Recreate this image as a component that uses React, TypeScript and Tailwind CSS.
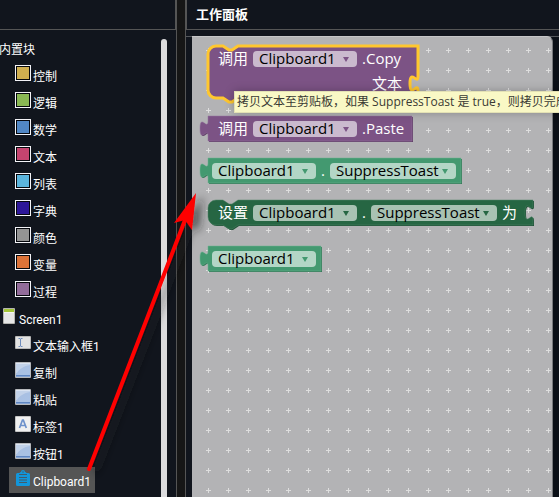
import React from "react";

const TAB_OUT = "V20c0-10-8 8-8-7.5s8 2.5 8-7.5";
const TAB_IN = "v5c0 10-8-8-8 7.5s8-2.5 8 7.5";

function valuePath(width: number) {
  return `M0 0H${width}V25H0${TAB_OUT}z`;
}

function statementPath(width: number, height: number, socketY: number) {
  return `M0 8A8 8 0 0 1 8 0H15l6 4h3l6-4H${width}V${socketY}${TAB_IN}V${height}H30l-6 4h-3l-6-4H8a8 8 0 0 1-8-8z`;
}

type Tone = "purple" | "green" | "dark";

const tones: Record<Tone, { fill: string; shade: string; light: string; text: string }> = {
  purple: { fill: "#7c5385", shade: "#63426a", light: "#9675a0", text: "text-[#7c5385]" },
  green: { fill: "#439970", shade: "#367a5a", light: "#6cb392", text: "text-[#439970]" },
  dark: { fill: "#266643", shade: "#1e5236", light: "#4f8568", text: "text-[#266643]" },
};

function Shape({ d, tone, selected }: { d: string; tone: Tone; selected?: boolean }) {
  const t = tones[tone];
  return (
    <svg className="absolute left-0 top-0 h-px w-px overflow-visible" aria-hidden="true">
      {!selected && <path d={d} fill={t.shade} transform="translate(1 1)" />}
      <path d={d} fill={t.fill} />
      {selected ? (
        <path d={d} fill="none" stroke="#ffc72e" strokeWidth="3" />
      ) : (
        <path d={d} fill="none" stroke={t.light} strokeWidth="1" opacity="0.5" />
      )}
    </svg>
  );
}

function Field({ value, tone, label, wide }: { value: string; tone: Tone; label: string; wide?: boolean }) {
  return (
    <span className={`relative flex h-4 items-center rounded bg-white/60 ${wide ? "w-[126px]" : "w-[104px]"} ${tones[tone].text}`}>
      <select
        aria-label={label}
        className="h-[22px] w-full shrink-0 appearance-none bg-transparent pb-0.5 pl-1.5 text-[15px] leading-5 text-black outline-none"
      >
        <option>{value}</option>
      </select>
      <svg viewBox="0 0 6 5" className="pointer-events-none absolute right-2 top-1.5 h-[5px] w-1.5" aria-hidden="true">
        <path d="M0 0h6L3 5z" fill="currentColor" />
      </svg>
    </span>
  );
}

function Word({ children }: { children: string }) {
  return <span className="pb-0.5">{children}</span>;
}

function Block({ place, d, tone, selected, children }: {
  place: string;
  d: string;
  tone: Tone;
  selected?: boolean;
  children: React.ReactNode;
}) {
  return (
    <div className={`absolute left-4 whitespace-nowrap text-[15px] leading-4 text-white ${place}`}>
      <Shape d={d} tone={tone} selected={selected} />
      {children}
    </div>
  );
}

function Row({ children, pad }: { children: React.ReactNode; pad: string }) {
  return <div className={`relative flex h-[26px] items-center gap-[5px] ${pad}`}>{children}</div>;
}

function Swatch({ color }: { color: string }) {
  return (
    <svg viewBox="0 0 16 16" className="size-4">
      <path fill="#f4f4f8" d="M0 0h16v16H0z" />
      <path fill="#05070c" d="M1 1h14v14H1z" />
      <path fill={color} d="M2 2h12v12H2z" />
    </svg>
  );
}

function ButtonIcon() {
  return (
    <svg viewBox="0 0 16 16" className="size-4">
      <defs>
        <linearGradient id="glass" x1="0" y1="0" x2="1" y2="1">
          <stop offset="0" stopColor="#a9bfe0" />
          <stop offset="1" stopColor="#a9c2e6" />
        </linearGradient>
      </defs>
      <rect width="16" height="16" rx="1" fill="#b7b9bd" />
      <rect x="1" y="1" width="14" height="14" fill="url(#glass)" />
      <path d="M1 1h14v2C9 4 4 7 2 11H1z" fill="#d3deef" opacity=".6" />
      <path d="M1 1h14v1H1z" fill="#e4ebf5" opacity=".7" />
      <path d="M1 13h14v1.500H1z" fill="#5f86c2" />
    </svg>
  );
}

function TextBoxIcon() {
  return (
    <svg viewBox="0 0 16 16" className="size-4">
      <rect y="1" width="16" height="13" rx="1" fill="#b8b8b8" />
      <rect x="1" y="2" width="14" height="11" fill="#e2e2e2" />
      <path d="M3.500 3.500h1.500l.5.500.5-.5h1.500M5.500 4v7M3.500 11.500h1.500l.5-.5.5.5h1.500" fill="none" stroke="#6f8cbc" />
    </svg>
  );
}

function LabelIcon() {
  return (
    <svg viewBox="0 0 16 16" className="size-4">
      <rect width="16" height="16" rx="1" fill="#c4c4c4" />
      <rect x="1" y="1" width="14" height="14" fill="#f0f0f0" />
      <path d="M4.500 12L7.500 4h.8l3 8M5.800 9.500h4.400" fill="none" stroke="#6f92cb" strokeWidth="1.700" />
    </svg>
  );
}

function ClipboardIcon() {
  return (
    <svg viewBox="0 0 16 17" className="h-[17px] w-4">
      <path
        fill="#1296db"
        d="M2.500 3H4.500L5.500 2H6L6.500.5Q8 -.5 9.500 .5L10 2h.5l1 1h2Q15 3 15 4.500v10Q15 16 13.500 16h-11Q1 16 1 14.500v-10Q1 3 2.500 3z"
      />
      <path d="M4 4.500h8M4 7.500h8M4 10h8M4 12.500h8" stroke="#425b6b" strokeWidth="1" />
      <circle cx="8" cy="2" r=".8" fill="#425b6b" />
    </svg>
  );
}

function ScreenIcon() {
  return (
    <svg viewBox="0 0 12 16" className="h-4 w-3">
      <rect width="12" height="16" rx="1" fill="#b4b4b0" />
      <path d="M1 1h10v3H1z" fill="#a4c639" />
      <path d="M1 4h10v11H1z" fill="#e6e6e6" />
      <path d="M1 4h10v1H1z" fill="#f6f6f2" />
    </svg>
  );
}

const drawers = [
  { name: "控制", color: "#cfae4f" },
  { name: "逻辑", color: "#8ab853" },
  { name: "数学", color: "#5187c5" },
  { name: "文本", color: "#c5446f" },
  { name: "列表", color: "#5bb5dd" },
  { name: "字典", color: "#2d1799" },
  { name: "颜色", color: "#949494" },
  { name: "变量", color: "#dc7339" },
  { name: "过程", color: "#926c9a" },
];

const components = [
  { name: "文本输入框1", icon: <TextBoxIcon /> },
  { name: "复制", icon: <ButtonIcon /> },
  { name: "粘贴", icon: <ButtonIcon /> },
  { name: "标签1", icon: <LabelIcon /> },
  { name: "按钮1", icon: <ButtonIcon /> },
  { name: "Clipboard1", icon: <ClipboardIcon />, selected: true },
];

function TreeItem({ name, icon, selected, indent = "ml-[9px] pl-1.5 pr-1" }: {
  name: string;
  icon?: React.ReactNode;
  selected?: boolean;
  indent?: string;
}) {
  return (
    <li className="mb-px flex">
      <button type="button" className={`flex h-[26px] gap-0.5 whitespace-nowrap pt-[3px] ${indent} ${selected ? "bg-[#555]" : ""}`}>
        {icon}
        <span className="pt-1 leading-4">{name}</span>
      </button>
    </li>
  );
}

export default function App() {
  return (
    <main className="relative flex h-screen overflow-hidden bg-[#11151d] font-['Open_Sans','Noto_Sans_CJK_SC',sans-serif] text-white">
      <aside className="flex w-[177px] shrink-0 flex-col border-r border-[#555]">
        <header className="h-[30px] shrink-0 border-b border-r border-[#555]" />
        <div className="flex min-h-0 flex-1 pr-[9px]">
          <ul className="min-w-0 flex-1 overflow-hidden pt-[5px] font-['Roboto','Noto_Sans_CJK_SC',sans-serif] text-xs">
            <TreeItem name="内置块" indent="-ml-px" />
            {drawers.map((d) => (
              <TreeItem key={d.name} name={d.name} icon={<Swatch color={d.color} />} />
            ))}
            <TreeItem name="Screen1" icon={<ScreenIcon />} indent="ml-[3px] gap-1" />
            {components.map((c) => (
              <TreeItem key={c.name} {...c} />
            ))}
          </ul>
          <div className="mt-[9px] w-1.5 rounded-t-full bg-[#dcdcde]" />
        </div>
      </aside>

      <div className="w-2 shrink-0 bg-[#0b0b0b] bg-[radial-gradient(#161616_1px,transparent_1px)] bg-[length:2px_2px]" />

      <section className="flex min-w-0 flex-1 flex-col border-l border-[#555]">
        <header className="flex h-[30px] shrink-0 items-center border-b border-l border-[#555] pl-[9px]">
          <h1 className="pb-px text-[13px] font-bold leading-5">工作面板</h1>
        </header>
        <div className="mt-1.5 flex min-h-0 flex-1 border-t border-[#55585c] bg-[#0b1017] pr-1.5">
          <div className="w-1.5 bg-[#11151d]" />
          <div className="relative -mt-px min-w-0 flex-1 rounded-tr-md border-r border-t border-[#c6c6c8] border-r-[#77797c] bg-[#b3b3b5]">
            <svg className="absolute inset-0 size-full" aria-hidden="true">
              <defs>
                <pattern id="grid" x="6" y="3" width="20" height="20" patternUnits="userSpaceOnUse">
                  <path d="M8 10.500h5M10.500 8v5" stroke="#dedede" />
                </pattern>
              </defs>
              <rect width="100%" height="100%" fill="url(#grid)" />
            </svg>

            <Block place="top-[9px]" d={statementPath(210, 52, 25)} tone="purple" selected>
              <Row pad="pl-2.5">
                <Word>调用</Word>
                <Field value="Clipboard1" tone="purple" label="调用组件" />
                <Word>.Copy</Word>
              </Row>
              <div className="relative flex h-6 w-[210px] items-center justify-end pr-4">
                <Word>文本</Word>
              </div>
            </Block>

            <Block place="top-[79px]" d={valuePath(204)} tone="purple">
              <Row pad="pl-2.5">
                <Word>调用</Word>
                <Field value="Clipboard1" tone="purple" label="调用组件" />
                <Word>.Paste</Word>
              </Row>
            </Block>

            <Block place="top-[121px]" d={valuePath(253)} tone="green">
              <Row pad="pl-1">
                <Field value="Clipboard1" tone="green" label="组件" />
                <Word>.</Word>
                <Field value="SuppressToast" tone="green" label="属性" wide />
              </Row>
            </Block>

            <Block place="top-[163px]" d={statementPath(325, 25, 0)} tone="dark">
              <Row pad="pl-2.5">
                <Word>设置</Word>
                <Field value="Clipboard1" tone="dark" label="组件" />
                <Word>.</Word>
                <Field value="SuppressToast" tone="dark" label="属性" wide />
                <Word>为</Word>
              </Row>
            </Block>

            <Block place="top-[209px]" d={valuePath(113)} tone="green">
              <Row pad="pl-1">
                <Field value="Clipboard1" tone="green" label="组件" />
              </Row>
            </Block>

            <div
              role="tooltip"
              className="absolute left-[42px] top-[54px] h-[22px] whitespace-nowrap border border-[#e3e1b4] bg-[#f9f8c5] px-0.5 text-xs leading-5 text-[#3a3a34] shadow-[0_0_10px_rgba(0,0,0,0.25)]"
            >
              拷贝文本至剪贴板，如果 SuppressToast 是 true，则拷贝完成
            </div>
          </div>
        </div>
      </section>

      <svg className="pointer-events-none absolute left-0 top-0 h-[497px] w-[220px] overflow-visible" aria-hidden="true">
        <defs>
          <filter id="arrowShadow" x="-20%" y="-20%" width="150%" height="150%">
            <feDropShadow dx="7" dy="3" stdDeviation="4" floodColor="#222" floodOpacity="0.6" />
          </filter>
        </defs>
        <g filter="url(#arrowShadow)" fill="#f00">
          <path d="M89 469L185 220" stroke="#f00" strokeWidth="4" strokeLinecap="round" />
          <path d="M196 193L174 223L185 220L192 230z" />
        </g>
      </svg>
    </main>
  );
}
